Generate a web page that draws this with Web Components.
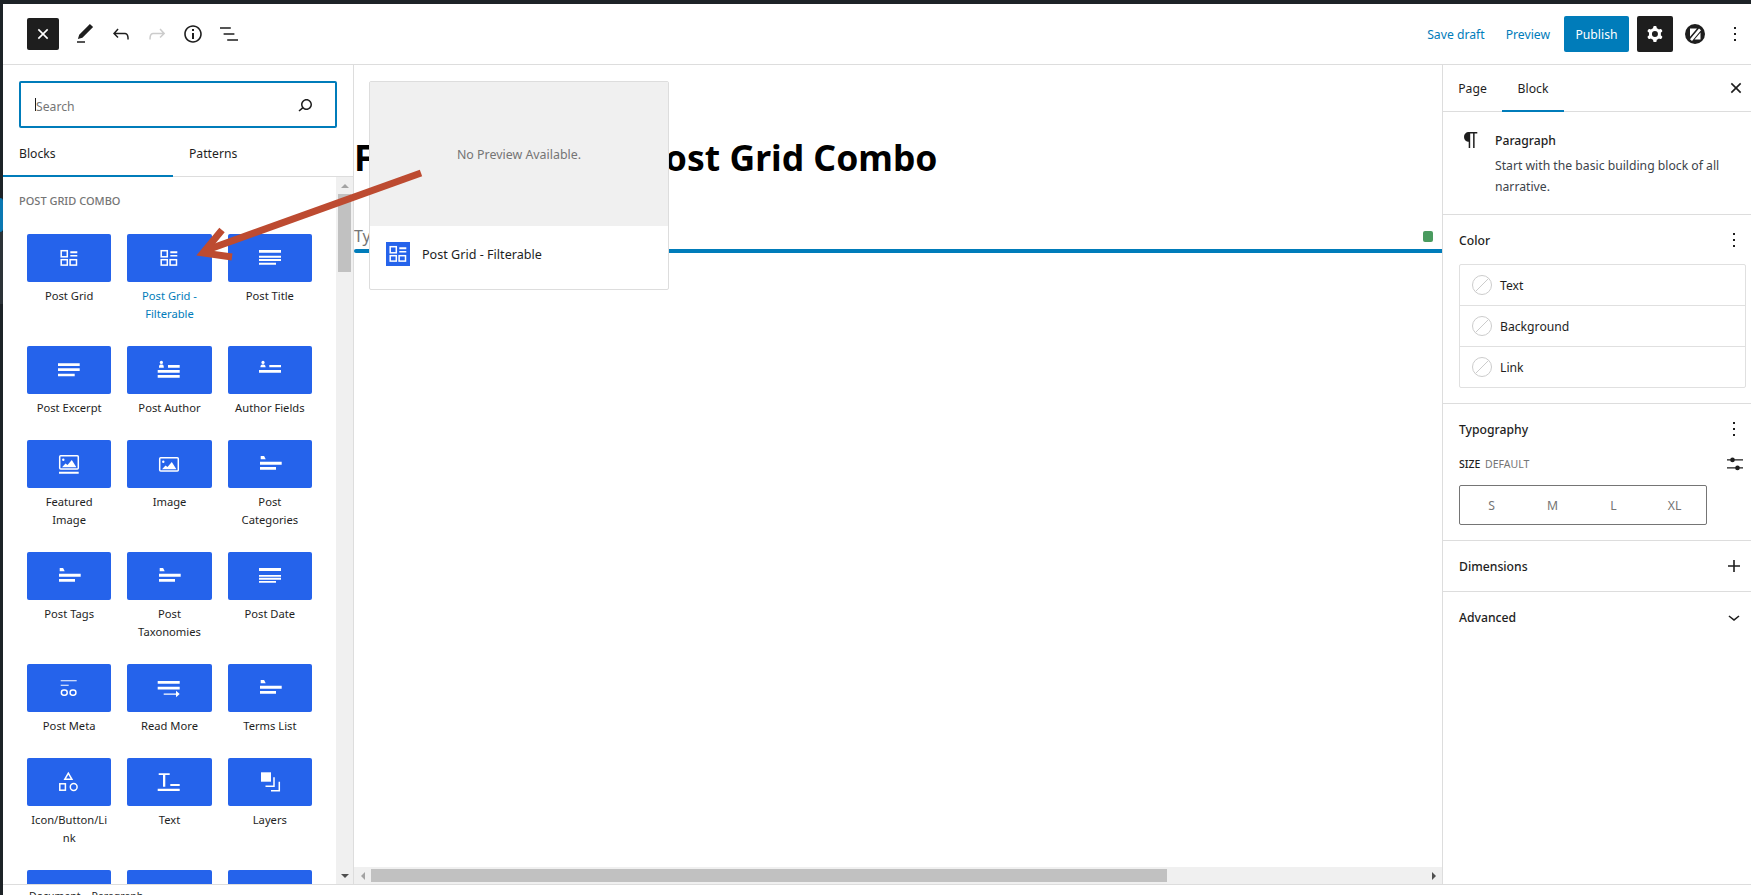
<!DOCTYPE html>
<html lang="en">
<head>
<meta charset="utf-8">
<title>Post Grid Combo</title>
<style>
  html, body { margin: 0; height: 100%; overflow: hidden; background: #1d2327; }
  body { font-family: 'Noto Sans', sans-serif; font-size: 12.2px; color: #1e1e1e; }
</style>
</head>
<body>
<wp-editor>
  <wp-topbar slot="top"></wp-topbar>
  <block-inserter slot="left"></block-inserter>
  <editor-canvas slot="center"></editor-canvas>
  <settings-sidebar slot="right"></settings-sidebar>
  <status-footer slot="bottom"></status-footer>
  <block-preview slot="overlay"></block-preview>
  <note-arrow slot="overlay"></note-arrow>
</wp-editor>

<script>
const ICONS = {
  close: '<path fill="none" stroke="currentColor" stroke-width="2.4" d="M5 5l14 14M19 5L5 19"/>',
  pencil: '<path d="M20.1 5.1L16.9 2 6.2 12.7l-1.3 4.4 4.5-1.3L20.1 5.1zM4 20.8h8v-1.5H4v1.5z"/>',
  undo: '<path d="M18.3 11.7c-.6-.6-1.4-.9-2.3-.9H6.7l2.9-3.3-1.1-1-4.5 5L8.5 16l1-1-2.7-2.7H16c.5 0 .9.2 1.3.5 1 1 1 3.4 1 4.5v.3h1.5v-.2c0-1.5 0-4.3-1.5-5.7z"/>',
  redo: '<path d="M15.6 6.5l-1.1 1 2.9 3.3H8c-.9 0-1.7.3-2.3.9-1.4 1.5-1.4 4.2-1.4 5.6v.2h1.5v-.3c0-1.1 0-3.5 1-4.5.3-.3.7-.5 1.3-.5h9.2L14.5 15l1.1 1.1 4.6-4.6-4.6-5z"/>',
  info: '<path d="M12 3.2c-4.8 0-8.8 3.9-8.8 8.8 0 4.8 3.9 8.8 8.8 8.8 4.8 0 8.8-3.9 8.8-8.8 0-4.8-4-8.8-8.8-8.8zm0 16c-4 0-7.2-3.3-7.2-7.2C4.8 8 8 4.8 12 4.8s7.2 3.3 7.2 7.2c0 4-3.2 7.2-7.2 7.2zM11 17h2v-6h-2v6zm0-8h2V7h-2v2z"/>',
  list: '<path d="M13.8 5.2H3v1.5h10.8V5.2zm-3.6 12v1.5H21v-1.5H10.2zm7.2-6H6.6v1.5h10.8v-1.5z"/>',
  search: '<path d="M13.5 6C10.5 6 8 8.5 8 11.5c0 1.1.3 2.1.9 3l-3.4 3 1 1.1 3.4-2.9c1 .9 2.2 1.4 3.6 1.4 3 0 5.5-2.5 5.5-5.5C19 8.5 16.5 6 13.5 6zm0 9.5c-2.2 0-4-1.8-4-4s1.8-4 4-4 4 1.8 4 4-1.8 4-4 4z"/>',
  cog: '<path fill-rule="evenodd" d="M10.289 4.836A1 1 0 0111.275 4h1.306a1 1 0 01.987.836l.244 1.466c.787.26 1.503.679 2.108 1.218l1.393-.522a1 1 0 011.216.437l.653 1.13a1 1 0 01-.23 1.273l-1.148.944a6.025 6.025 0 010 2.435l1.149.946a1 1 0 01.23 1.272l-.653 1.13a1 1 0 01-1.216.437l-1.394-.522c-.605.54-1.32.958-2.108 1.218l-.244 1.466a1 1 0 01-.987.836h-1.306a1 1 0 01-.986-.836l-.244-1.466a5.995 5.995 0 01-2.108-1.218l-1.394.522a1 1 0 01-1.217-.436l-.653-1.131a1 1 0 01.23-1.272l1.149-.946a6.026 6.026 0 010-2.435l-1.148-.944a1 1 0 01-.23-1.272l.653-1.131a1 1 0 011.217-.437l1.393.522a5.994 5.994 0 012.108-1.218l.244-1.466zM14.929 12a3 3 0 11-6 0 3 3 0 016 0z"/>',
  dots: '<path d="M13 19h-2v-2h2v2zm0-6h-2v-2h2v2zm0-6h-2V5h2v2z"/>',
  plus: '<path d="M18 11.2h-5.2V6h-1.6v5.2H6v1.6h5.2V18h1.6v-5.2H18z"/>',
  chevron: '<path d="M17.5 11.6L12 16l-5.5-4.4.9-1.2L12 14l4.5-3.6 1 1.2z"/>',
  paragraph: '<path d="M18.3 4H9.9v-.1l-.9.2c-2.3.4-4 2.4-4 4.8s1.7 4.4 4 4.8l.7.1V20h1.5V5.5h2.9V20h1.5V5.5h2.7V4z"/>',
  sliders: '<path d="M4 7.2h16v1.4H4zM4 15.2h16v1.4H4z"/><circle cx="9.5" cy="7.9" r="2.3"/><circle cx="14.5" cy="15.9" r="2.3"/>',
  logo: '<circle cx="12" cy="12" r="10"/><path fill="#fff" d="M7 17.2l9-10.6 2 1.7-9 10.6zM7 6.5h7l-7 8.2zM17.5 10.5v7h-6z"/>',
  grid: '<g fill="none" stroke="currentColor" stroke-width="1.5"><rect x="4.2" y="4.7" width="6.1" height="6.1"/><rect x="4.2" y="13.7" width="6.1" height="5.4"/><rect x="13.1" y="13.7" width="6.4" height="5.4"/></g><path d="M13.3 5.3h7v2h-7zM13.3 9h7v1.4h-7z"/>',
  title: '<path d="M1 4h22v2.7H1zM1 9.7h22v2H1zM1 13h22v2H1zM1 16.7h17v2H1z"/>',
  excerpt: '<path d="M1 5.3h21.7V8H1zM1 10.3h21.7V13H1zM1 15.7h16.7v2.6H1z"/>',
  author: '<circle cx="4.4" cy="4.4" r="1.6"/><path d="M2 9.7c0-3 1-3.2 2.4-3.2s2.4.2 2.4 3.2zM11 7h11.7v2.7H11zM.7 12h22v2.7H.7zM.7 17h22v2.7H.7z"/>',
  fields: '<circle cx="5" cy="4.4" r="1.6"/><path d="M2.4 9.3c0-2.7 1.2-2.9 2.6-2.9s2.6.2 2.6 2.9zM11.3 7H23v2.3H11.3zM1 12h22v2.7H1z"/>',
  featured: '<rect x="2.7" y="3.7" width="18.6" height="13.2" rx="1" fill="none" stroke="currentColor" stroke-width="1.5"/><circle cx="6.3" cy="7.7" r="1.2"/><path d="M5 15.2l3.5-3.8 2 1.6 4.3-5 4.6 7.2zM2 19.7h19.7v2H2z"/>',
  image: '<rect x="2.7" y="5.7" width="18.6" height="13.2" rx="1" fill="none" stroke="currentColor" stroke-width="1.5"/><circle cx="6.3" cy="9.7" r="1.2"/><path d="M5 17.2l3.5-3.8 2 1.6 4.3-5 4.6 7.2z"/>',
  category: '<path d="M2.7 7.3V4h3.4l1.6 3.3zM2 9.7h21.7v3H2zM2 15h16v2.7H2z"/>',
  date: '<path d="M1 4h22v3H1zM1 11h22v1.7H1zM1 13.8h22v1.9H1zM1 17h17v1.7H1z"/>',
  meta: '<path d="M3.7 4.3h16v1H3.7zM3.7 8.7h8v1h-8z"/><g fill="none" stroke="currentColor" stroke-width="1.5"><rect x="4.4" y="14" width="5.8" height="5.2" rx="2.4"/><rect x="13.1" y="14" width="5.8" height="5.2" rx="2.4"/></g>',
  more: '<path d="M.7 5h22v2.7H.7zM.7 10.7h22v2.7H.7zM6.7 17.4H19v1.3H6.7z"/><path d="M19 14.8l3.7 3.2-3.7 3.2z"/>',
  shapes: '<g fill="none" stroke="currentColor" stroke-width="1.5"><path d="M11.3 3.2l3.6 6.1H7.8z"/><rect x="2.8" y="13.8" width="5.6" height="6.4"/><circle cx="16.7" cy="17" r="3.4"/></g>',
  text: '<path d="M1.7 3.3h11v1.7h-11zM6 5h2.3v11.7H6zM13.3 14h9.4v2h-9.4zM.7 18.7h22V21H.7z"/>',
  layers: '<path d="M3 2.3h10v9.4H3z"/><path fill="none" stroke="currentColor" stroke-width="1.5" d="M16 7.3v9H7.5M21.3 11.7v9H13"/>'
};

class UiIcon extends HTMLElement {
  connectedCallback() {
    const size = this.getAttribute('size') || 24;
    this.attachShadow({ mode: 'open' }).innerHTML = `
      <style>
        :host { display: inline-flex; flex: none; width: ${size}px; height: ${size}px; }
        svg { display: block; fill: currentColor; }
      </style>
      <svg width="${size}" height="${size}" viewBox="0 0 24 24">${ICONS[this.getAttribute('name')] || ''}</svg>`;
  }
}

class WpEditor extends HTMLElement {
  connectedCallback() {
    this.attachShadow({ mode: 'open' }).innerHTML = `
      <style>
        :host { display: block; position: relative; width: 1751px; height: 895px; overflow: hidden; background: #1d2327; padding-top: 4px; box-sizing: border-box; }
        .frame { display: flex; height: 100%; }
        .strip { flex: none; width: 3px; display: flex; flex-direction: column; }
        .strip i { display: block; }
        .strip .gap { height: 194px; }
        .strip .current { height: 34px; background: #0a78b2; border-radius: 0 4px 4px 0; }
        .strip .hover { height: 72px; background: #2c3338; }
        .main { flex: 1; min-width: 0; display: flex; flex-direction: column; background: #fff; }
        .body { flex: 1; min-height: 0; display: flex; }
        ::slotted([slot="overlay"]) { position: absolute; }
      </style>
      <div class="frame">
        <div class="strip"><i class="gap"></i><i class="current"></i><i class="hover"></i></div>
        <div class="main">
          <slot name="top"></slot>
          <div class="body">
            <slot name="left"></slot>
            <slot name="center"></slot>
            <slot name="right"></slot>
          </div>
          <slot name="bottom"></slot>
        </div>
      </div>
      <slot name="overlay"></slot>`;
  }
}

class WpTopbar extends HTMLElement {
  connectedCallback() {
    this.attachShadow({ mode: 'open' }).innerHTML = `
      <style>
        :host { display: flex; flex: none; align-items: center; height: 60px; padding: 0 4px 0 24px; border-bottom: 1px solid #ddd; }
        .close { display: flex; align-items: center; justify-content: center; width: 32px; height: 32px; margin-right: 8px; background: #1e1e1e; color: #fff; border-radius: 2px; }
        .tool { display: flex; align-items: center; justify-content: center; width: 36px; height: 36px; color: #1e1e1e; }
        .tool.off { color: #ccc; }
        .actions { margin-left: auto; display: flex; align-items: center; }
        .link { color: #007cba; }
        .link.save { margin-right: 21px; }
        .link.view { margin-right: 14px; }
        .publish { display: flex; align-items: center; justify-content: center; width: 65px; height: 36px; background: #007cba; color: #fff; border-radius: 2px; margin-right: 8px; }
        .gear { display: flex; align-items: center; justify-content: center; width: 36px; height: 36px; background: #1e1e1e; color: #fff; border-radius: 2px; margin-right: 10px; }
        .logo { color: #1e1e1e; margin-right: 16px; }
      </style>
      <div class="close"><ui-icon name="close" size="16"></ui-icon></div>
      <div class="tool"><ui-icon name="pencil"></ui-icon></div>
      <div class="tool"><ui-icon name="undo"></ui-icon></div>
      <div class="tool off"><ui-icon name="redo"></ui-icon></div>
      <div class="tool"><ui-icon name="info"></ui-icon></div>
      <div class="tool"><ui-icon name="list"></ui-icon></div>
      <div class="actions">
        <span class="link save">Save draft</span>
        <span class="link view">Preview</span>
        <span class="publish">Publish</span>
        <div class="gear"><ui-icon name="cog"></ui-icon></div>
        <ui-icon class="logo" name="logo"></ui-icon>
        <ui-icon name="dots"></ui-icon>
      </div>`;
  }
}

class BlockTile extends HTMLElement {
  connectedCallback() {
    const label = this.getAttribute('label') || '';
    this.attachShadow({ mode: 'open' }).innerHTML = `
      <style>
        :host { display: block; padding-bottom: 23px; min-width: 0; }
        .tile { display: flex; align-items: center; justify-content: center; height: 48px; background: #2563eb; color: #fff; border-radius: 2px; }
        .label { margin-top: 5px; padding: 0 3px; font-size: 11.2px; line-height: 18px; text-align: center; overflow-wrap: anywhere; color: ${this.hasAttribute('active') ? '#007cba' : '#1e1e1e'}; }
      </style>
      <div class="tile"><ui-icon name="${this.getAttribute('icon') || ''}"></ui-icon></div>
      <div class="label">${label}</div>`;
  }
}

class VScrollbar extends HTMLElement {
  connectedCallback() {
    this.attachShadow({ mode: 'open' }).innerHTML = `
      <style>
        :host { display: flex; flex: none; flex-direction: column; align-items: center; width: 17px; background: #f0f0f0; }
        .arrow { flex: none; height: 17px; display: flex; align-items: center; justify-content: center; }
        .arrow.end { margin-top: auto; }
        .thumb { flex: none; width: 13px; height: 78px; background: #c1c1c1; }
        .up { border: 4px solid transparent; border-top: 0; border-bottom: 4px solid #a3a3a3; }
        .down { border: 4px solid transparent; border-bottom: 0; border-top: 4px solid #505050; }
      </style>
      <div class="arrow"><i class="up"></i></div>
      <div class="thumb"></div>
      <div class="arrow end"><i class="down"></i></div>`;
  }
}

class HScrollbar extends HTMLElement {
  connectedCallback() {
    this.attachShadow({ mode: 'open' }).innerHTML = `
      <style>
        :host { display: flex; flex: none; align-items: center; height: 17px; background: #f0f0f0; }
        .arrow { flex: none; width: 17px; height: 17px; display: flex; align-items: center; justify-content: center; }
        .arrow.end { margin-left: auto; }
        .thumb { flex: none; width: 796px; height: 13px; background: #c1c1c1; }
        .left { border: 4px solid transparent; border-left: 0; border-right: 4px solid #a3a3a3; }
        .right { border: 4px solid transparent; border-right: 0; border-left: 4px solid #505050; }
      </style>
      <div class="arrow"><i class="left"></i></div>
      <div class="thumb"></div>
      <div class="arrow end"><i class="right"></i></div>`;
  }
}

class BlockInserter extends HTMLElement {
  connectedCallback() {
    const tiles = [
      ['Post Grid', 'grid'], ['Post Grid - Filterable', 'grid', true], ['Post Title', 'title'],
      ['Post Excerpt', 'excerpt'], ['Post Author', 'author'], ['Author Fields', 'fields'],
      ['Featured Image', 'featured'], ['Image', 'image'], ['Post Categories', 'category'],
      ['Post Tags', 'category'], ['Post Taxonomies', 'category'], ['Post Date', 'date'],
      ['Post Meta', 'meta'], ['Read More', 'more'], ['Terms List', 'category'],
      ['Icon/Button/Link', 'shapes'], ['Text', 'text'], ['Layers', 'layers'],
      ['', ''], ['', ''], ['', '']
    ];
    this.attachShadow({ mode: 'open' }).innerHTML = `
      <style>
        :host { display: flex; flex: none; flex-direction: column; width: 350px; border-right: 1px solid #ddd; min-height: 0; }
        .search { display: flex; align-items: center; height: 43px; margin: 16px 0 0 16px; width: 314px; border: 2px solid #007cba; border-radius: 2px; padding: 0; }
        .caret { width: 1px; height: 13px; margin-left: 14px; background: #1e1e1e; }
        .hint { color: #757575; flex: 1; padding-top: 4px; }
        .search ui-icon { margin-right: 18px; color: #1e1e1e; }
        .tabs { flex: none; display: flex; height: 48px; border-bottom: 1px solid #ddd; }
        .tab { width: 170px; box-sizing: border-box; display: flex; align-items: center; margin-bottom: -1px; padding-left: 16px; padding-top: 4px; }
        .tab.on { border-bottom: 2px solid #007cba; }
        .tab.off { padding-bottom: 2px; }
        .lower { flex: 1; min-height: 0; display: flex; }
        .list { flex: 1; min-width: 0; overflow: hidden; }
        h2 { margin: 16px 0 25px 16px; font-size: 11px; line-height: 16px; font-weight: 500; color: #757575; text-transform: uppercase; }
        .grid { display: grid; grid-template-columns: repeat(3, 1fr); column-gap: 16px; width: 285px; margin-left: 24px; }
      </style>
      <div class="search"><i class="caret"></i><span class="hint">Search</span><ui-icon name="search"></ui-icon></div>
      <div class="tabs"><div class="tab on">Blocks</div><div class="tab off">Patterns</div></div>
      <div class="lower">
        <div class="list">
          <h2>Post Grid Combo</h2>
          <div class="grid">
            ${tiles.map(([label, icon, active]) => `<block-tile label="${label}" icon="${icon}"${active ? ' active' : ''}></block-tile>`).join('')}
          </div>
        </div>
        <v-scrollbar></v-scrollbar>
      </div>`;
  }
}

class EditorCanvas extends HTMLElement {
  connectedCallback() {
    this.attachShadow({ mode: 'open' }).innerHTML = `
      <style>
        :host { display: flex; flex: 1; min-width: 0; flex-direction: column; position: relative; }
        .doc { flex: 1; min-height: 0; overflow: hidden; padding-top: 72px; }
        h1 { margin: 0 0 46px; font-size: 35.5px; line-height: 41px; font-weight: 700; color: #000; white-space: nowrap; }
        h1 span { letter-spacing: .4px; }
        .typing { font-size: 16px; line-height: 25px; color: #757575; }
        .line { height: 4px; background: #007cba; border-radius: 2px 0 0 2px; }
        .handle { position: absolute; top: 166px; right: 9px; width: 10px; height: 11px; background: #4a9b5f; border-radius: 2px; }
      </style>
      <div class="doc">
        <h1><span>Filterable Grid - </span>Post Grid Combo</h1>
        <div class="typing">Type / to choose a block</div>
        <div class="line"></div>
      </div>
      <div class="handle"></div>
      <h-scrollbar></h-scrollbar>`;
  }
}

class PanelSection extends HTMLElement {
  connectedCallback() {
    const icon = this.getAttribute('icon');
    this.attachShadow({ mode: 'open' }).innerHTML = `
      <style>
        :host { display: block; padding: 13px 5px 13px 16px; border-bottom: 1px solid #ddd; }
        .head { display: flex; align-items: center; justify-content: space-between; height: 24px; font-weight: 500; }
        :host([open]) { padding-bottom: 15px; }
      </style>
      <div class="head"><span>${this.getAttribute('heading') || ''}</span><ui-icon name="${icon}"></ui-icon></div>
      <slot></slot>`;
  }
}

class ColorRow extends HTMLElement {
  connectedCallback() {
    this.attachShadow({ mode: 'open' }).innerHTML = `
      <style>
        :host { display: flex; align-items: center; gap: 8px; height: 40px; padding-left: 12px; border-bottom: 1px solid #e0e0e0; color: #1e1e1e; }
        :host(:last-child) { border-bottom: 0; }
        svg { display: block; }
      </style>
      <svg width="20" height="20" viewBox="0 0 20 20" fill="none" stroke="#ccc"><circle cx="10" cy="10" r="9.5"/><path d="M3.5 16.5L16.5 3.5"/></svg>
      <slot></slot>`;
  }
}

class SizeToggle extends HTMLElement {
  connectedCallback() {
    this.attachShadow({ mode: 'open' }).innerHTML = `
      <style>
        :host { display: flex; box-sizing: border-box; width: 248px; height: 40px; margin-top: 13px; padding: 0 1px; border: 1px solid #757575; border-radius: 2px; color: #757575; }
        span { flex: 1; display: flex; align-items: center; justify-content: center; }
      </style>
      <span>S</span><span>M</span><span>L</span><span>XL</span>`;
  }
}

class SettingsSidebar extends HTMLElement {
  connectedCallback() {
    this.attachShadow({ mode: 'open' }).innerHTML = `
      <style>
        :host { display: block; flex: none; width: 308px; border-left: 1px solid #ddd; }
        .tabs { display: flex; align-items: stretch; height: 46px; border-bottom: 1px solid #ddd; padding-right: 4px; }
        .tab { display: flex; align-items: center; justify-content: center; box-sizing: border-box; width: 59px; }
        .tab.on { width: 62px; padding-top: 2px; border-bottom: 2px solid #007cba; margin-bottom: -1px; }
        .tabs ui-icon { margin: auto 3px auto auto; }
        .card { display: flex; gap: 12px; padding: 16px; border-bottom: 1px solid #ddd; height: 70px; }
        .card b { display: block; font-weight: 500; line-height: 26px; }
        .card p { margin: 2px 0 0; line-height: 20.8px; color: #3c434a; }
        .box { margin: 12px 0 0; border: 1px solid #e0e0e0; border-radius: 2px; }
        .size { display: flex; align-items: center; justify-content: space-between; height: 16px; margin-top: 15px; font-size: 10.5px; font-weight: 500; text-transform: uppercase; }
        .size em { font-style: normal; color: #757575; margin-left: 2px; font-weight: 400; }
        .size ui-icon { margin-right: -1px; }
      </style>
      <div class="tabs">
        <div class="tab">Page</div>
        <div class="tab on">Block</div>
        <ui-icon name="close" size="16"></ui-icon>
      </div>
      <div class="card">
        <ui-icon name="paragraph"></ui-icon>
        <div>
          <b>Paragraph</b>
          <p>Start with the basic building block of all narrative.</p>
        </div>
      </div>
      <panel-section heading="Color" icon="dots" open>
        <div class="box">
          <color-row>Text</color-row>
          <color-row>Background</color-row>
          <color-row>Link</color-row>
        </div>
      </panel-section>
      <panel-section heading="Typography" icon="dots" open>
        <div class="size"><span>Size <em>Default</em></span><ui-icon name="sliders"></ui-icon></div>
        <size-toggle></size-toggle>
      </panel-section>
      <panel-section heading="Dimensions" icon="plus"></panel-section>
      <panel-section heading="Advanced" icon="chevron" style="border-bottom:0"></panel-section>`;
  }
}

class StatusFooter extends HTMLElement {
  connectedCallback() {
    this.attachShadow({ mode: 'open' }).innerHTML = `
      <style>
        :host { display: flex; flex: none; box-sizing: border-box; height: 11px; border-top: 1px solid #ddd; padding: 1px 0 0 26px; gap: 11px; font-size: 10.5px; line-height: 20px; overflow: hidden; }
      </style>
      <span>Document</span><span>Paragraph</span>`;
  }
}

class BlockPreview extends HTMLElement {
  connectedCallback() {
    this.attachShadow({ mode: 'open' }).innerHTML = `
      <style>
        :host { display: block; left: 369px; top: 81px; width: 300px; height: 209px; box-sizing: border-box; background: #fff; border: 1px solid #ddd; border-radius: 2px; font-size: 12.6px; }
        .shot { display: flex; align-items: center; justify-content: center; height: 144px; background: #f0f0f0; color: #757575; font-size: 12.4px; }
        .info { display: flex; align-items: center; gap: 12px; padding: 16px; }
        .mark { display: flex; width: 24px; height: 24px; background: #2563eb; color: #fff; }
      </style>
      <div class="shot">No Preview Available.</div>
      <div class="info"><div class="mark"><ui-icon name="grid"></ui-icon></div><span>Post Grid - Filterable</span></div>`;
  }
}

class NoteArrow extends HTMLElement {
  connectedCallback() {
    this.attachShadow({ mode: 'open' }).innerHTML = `
      <style>
        :host { display: block; left: 0; top: 0; pointer-events: none; }
        svg { display: block; }
      </style>
      <svg width="450" height="290" viewBox="0 0 450 290" fill="none" stroke="#bd4b31" stroke-width="7">
        <path d="M421 173L204 251"/>
        <path d="M222 230L203 253L232 257" stroke-linejoin="miter"/>
      </svg>`;
  }
}

customElements.define('ui-icon', UiIcon);
customElements.define('wp-editor', WpEditor);
customElements.define('wp-topbar', WpTopbar);
customElements.define('block-tile', BlockTile);
customElements.define('v-scrollbar', VScrollbar);
customElements.define('h-scrollbar', HScrollbar);
customElements.define('block-inserter', BlockInserter);
customElements.define('editor-canvas', EditorCanvas);
customElements.define('panel-section', PanelSection);
customElements.define('color-row', ColorRow);
customElements.define('size-toggle', SizeToggle);
customElements.define('settings-sidebar', SettingsSidebar);
customElements.define('status-footer', StatusFooter);
customElements.define('block-preview', BlockPreview);
customElements.define('note-arrow', NoteArrow);
</script>
</body>
</html>
